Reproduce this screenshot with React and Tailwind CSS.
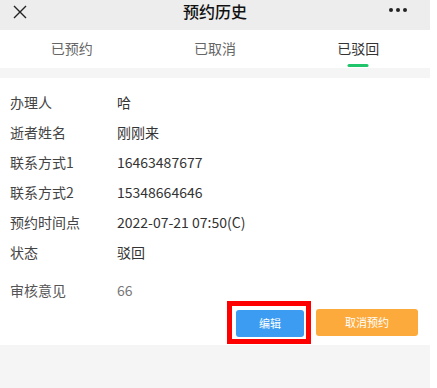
const rows = [
  ["办理人", "哈"],
  ["逝者姓名", "刚刚来"],
  ["联系方式1", "16463487677"],
  ["联系方式2", "15348664646"],
  ["预约时间点", "2022-07-21 07:50(C)"],
  ["状态", "驳回"],
];

const tabs = ["已预约", "已取消", "已驳回"];

export default function App() {
  return (
    <div className="h-[388px] w-[437px] overflow-hidden bg-white font-['Noto_Sans_CJK_SC','Noto_Sans',sans-serif]">
      <div className="w-[430px] bg-[#f5f5f5] h-full">
        {/* header */}
        <div className="relative flex h-[30px] items-center justify-between bg-[#ededed] px-[12px]">
          <svg width="16" height="14" viewBox="0 0 16 14" className="mt-[-6px]">
            <path d="M2 1 L14 13 M14 1 L2 13" stroke="#222" strokeWidth="1.4" fill="none" />
          </svg>
          <span className="absolute left-1/2 top-[3px] -translate-x-1/2 text-[16px] leading-none font-medium text-[#111]">
            预约历史
          </span>
          <div className="mr-[11px] mt-[-10px] flex gap-[3px]">
            <span className="h-[4px] w-[4px] rounded-full bg-[#222]" />
            <span className="h-[4px] w-[4px] rounded-full bg-[#222]" />
            <span className="h-[4px] w-[4px] rounded-full bg-[#222]" />
          </div>
        </div>

        {/* tabs */}
        <div className="grid h-[38px] grid-cols-3 bg-white">
          {tabs.map((t, i) => (
            <div key={t} className="relative flex items-center justify-center pb-[2px]">
              <span className={`text-[14px] ${i === 2 ? "text-[#333]" : "text-[#666]"}`}>{t}</span>
              {i === 2 && (
                <span className="absolute bottom-[1px] left-1/2 h-[3px] w-[21px] -translate-x-1/2 rounded-full bg-[#1fc46b]" />
              )}
            </div>
          ))}
        </div>

        {/* card */}
        <div className="mt-[10px] bg-white pt-[9px] pb-[8px]">
          {rows.map(([k, v]) => (
            <div key={k} className="flex h-[30px] items-center px-[10px] text-[14px]">
              <span className="w-[107px] text-[#444]">{k}</span>
              <span className="text-[#333]">{v}</span>
            </div>
          ))}
          <div className="mt-[8px] flex h-[30px] items-center px-[10px] text-[14px]">
            <span className="w-[107px] text-[#555]">审核意见</span>
            <span className="text-[#777]">66</span>
          </div>
          <div className="mt-[4px] flex justify-end gap-[12px] pr-[12px]">
            <div className="relative">
              <button className="h-[27px] w-[68px] rounded-[3px] bg-[#3c9cf2] text-[11px] text-white">编辑</button>
              <span className="absolute left-[-9px] top-[-8px] h-[43px] w-[84px] border-[5px] border-[#ff0000]" />
            </div>
            <button className="h-[27px] w-[102px] rounded-[3px] bg-[#fdaa3c] text-[11px] text-white">取消预约</button>
          </div>
        </div>
      </div>
    </div>
  );
}
